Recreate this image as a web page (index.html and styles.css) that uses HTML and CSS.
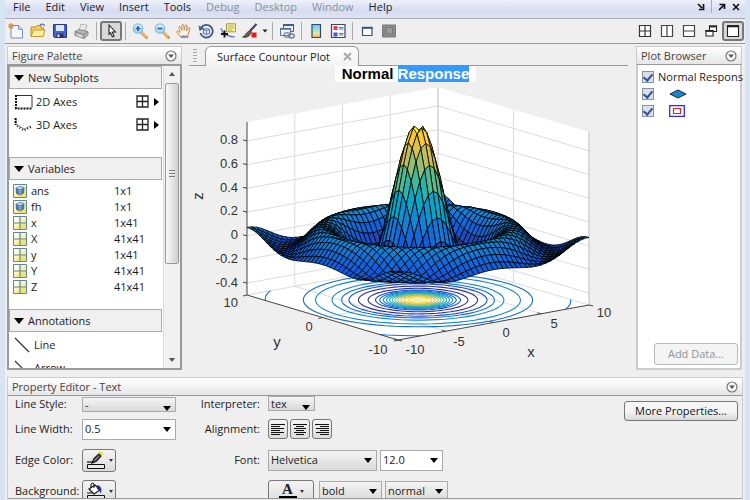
FILE: index.html
```html
<!DOCTYPE html>
<html lang="en">
<head>
<meta charset="utf-8">
<title>Surface Countour Plot</title>
<link rel="stylesheet" href="styles.css">
</head>
<body>
<svg class="defs" aria-hidden="true">
  <defs>
    <linearGradient id="glass" x1="0" y1="0" x2="0" y2="1"><stop offset="0" stop-color="#e8f7fd"/><stop offset="1" stop-color="#9fd3ee"/></linearGradient>
    <linearGradient id="rainbow" x1="0" y1="0" x2="0" y2="1"><stop offset="0" stop-color="#8fb4ea"/><stop offset=".4" stop-color="#8fe6dd"/><stop offset=".7" stop-color="#efe98a"/><stop offset="1" stop-color="#f0a878"/></linearGradient>
    <linearGradient id="cellfill" x1="0" y1="0" x2="1" y2="1"><stop offset=".2" stop-color="#fffef0"/><stop offset=".8" stop-color="#f3e25c"/></linearGradient>
  </defs>
  <symbol id="i-grid4" viewBox="0 0 14 14"><path d="M1 1h11v11H1zM6.500 1v11M1 6.500h11" fill="#fff" stroke="#222" stroke-width="1.300"/></symbol>
  <symbol id="i-menu" viewBox="0 0 12 12"><circle cx="6" cy="6" r="5" fill="#f8f8f8" stroke="#777" stroke-width="1.200"/><path d="M3.200 4.500h5.600L6 8z" fill="#555"/></symbol>
  <symbol id="i-matrix" viewBox="0 0 14 14"><path d="M.5.5h13v13H.5z" fill="url(#cellfill)" stroke="#5e86ad"/><path d="M7 1v12M1 7h12" stroke="#5e86ad" stroke-width="1.200"/></symbol>
  <symbol id="i-object" viewBox="0 0 14 14"><path d="M.5.5h13v13H.5z" fill="url(#cellfill)" stroke="#5e86ad"/><path d="M3 4l4-1.500 4 1-.5 5.500L7 11 3.500 9.500z" fill="#4c80bd" stroke="#2d5586" stroke-width=".8"/><path d="M3 4l4-1.500 4 1L7 5.300z" fill="#b9d6f2"/><path d="M7 5.300V11" stroke="#d4e6f7" stroke-width=".7"/></symbol>
</svg>

<div class="window">
  <nav class="menubar">
    <a href="#">File</a><a href="#">Edit</a><a href="#">View</a><a href="#">Insert</a><a href="#">Tools</a><a href="#" class="off">Debug</a><a href="#" class="off">Desktop</a><a href="#" class="off">Window</a><a href="#">Help</a>
    <div class="dock">
      <button aria-label="Dock"><svg width="8" height="8" viewBox="0 0 8 8"><path d="M1 1l4 4M6.500 1v5.500H2" fill="none" stroke="#111" stroke-width="1.700"/></svg></button>
      <i></i>
      <button aria-label="Undock"><svg width="8" height="8" viewBox="0 0 8 8"><path d="M1 7l5-5M1.500 1.500h5V6" fill="none" stroke="#111" stroke-width="1.700"/></svg></button>
      <button aria-label="Close"><svg width="8" height="8" viewBox="0 0 8 8"><path d="M1 1l6 6M7 1L1 7" stroke="#111" stroke-width="1.600"/></svg></button>
    </div>
  </nav>

  <div class="toolbar">
    <button aria-label="New"><svg viewBox="0 0 16 16"><path d="M3 2.500h7.500l4 4V15H3z" fill="#f4f9ff" stroke="#7291bd"/><path d="M10.500 2.500v4h4z" fill="#cfe0f4" stroke="#7291bd" stroke-width=".8"/><path d="M3 0v6M0 3h6M1 1l4 4M5 1L1 5" stroke="#e58c45" stroke-width="1.100"/></svg></button>
    <button aria-label="Open"><svg viewBox="0 0 16 16"><path d="M1 4h5l1-1.500h4V5h2.500v8H1z" fill="#f6d060" stroke="#b98a25"/><path d="M1 13.500L3.500 7H15l-2 6.500z" fill="#fff0a0" stroke="#c69a2e"/><path d="M10 2c2-1.500 4-1 4.500 1" fill="none" stroke="#4d78b5" stroke-width="1.200"/></svg></button>
    <button aria-label="Save"><svg viewBox="0 0 16 16"><path d="M1.500 1.500h13v13h-12l-1-1z" fill="#4a62c9" stroke="#26348f"/><path d="M4 2h8v6H4z" fill="#dbe8fc"/><path d="M4.500 10.500h7V14h-7z" fill="#26306b"/><path d="M5.500 11.500h2V14h-2z" fill="#eee"/></svg></button>
    <button aria-label="Print"><svg viewBox="0 0 16 16"><path d="M5 8l2-7 6 1.500L10.500 9z" fill="#fff" stroke="#999" stroke-width=".8"/><path d="M7.500 3.500l4 1M7 5.500l4 1" stroke="#b5b5b5" stroke-width=".7"/><path d="M1 8.500l4-2 9 2V12l-4 3.500-9-3z" fill="#b9b9b9" stroke="#777" stroke-width=".8"/><path d="M1 8.500l9 3 4-3M10 11.500v4" fill="none" stroke="#777" stroke-width=".8"/><path d="M3 11.500l5 1.800v1L3 12.500z" fill="#f5f5f5"/></svg></button>
    <i class="sep"></i>
    <button class="on" aria-label="Select"><svg viewBox="0 0 16 16"><path d="M6 2l6.500 7H9.300l1.700 4.200-1.700.7-1.700-4.200L6 11.300z" fill="#fff" stroke="#222" stroke-width="1.100"/></svg></button>
    <i class="sep"></i>
    <button aria-label="Zoom in"><svg viewBox="0 0 16 16"><path d="M9 9l5.500 5.500" stroke="#d99a55" stroke-width="3" stroke-linecap="round"/><path d="M9.500 9l4.500 4.500" stroke="#f5c07a" stroke-width="1.300"/><circle cx="6" cy="5.500" r="4.700" fill="url(#glass)" stroke="#7dbde2" stroke-width="1.200"/><path d="M6 3v5M3.500 5.500h5" stroke="#2558a3" stroke-width="1.600"/></svg></button>
    <button aria-label="Zoom out"><svg viewBox="0 0 16 16"><path d="M9 9l5.500 5.500" stroke="#d99a55" stroke-width="3" stroke-linecap="round"/><path d="M9.500 9l4.500 4.500" stroke="#f5c07a" stroke-width="1.300"/><circle cx="6" cy="5.500" r="4.700" fill="url(#glass)" stroke="#7dbde2" stroke-width="1.200"/><path d="M3.500 5.500h5" stroke="#2558a3" stroke-width="1.600"/></svg></button>
    <button aria-label="Pan"><svg viewBox="0 0 16 16"><path d="M5 14.500L1 9.500c-.8-1.200.6-1.900 1.500-1l1.500 1.200L2.800 4.500c-.2-1.200 1.300-1.500 1.700-.4L6 7.500 5.800 2.300c0-1.200 1.600-1.300 1.800 0l.7 4.800L9.300 2.500c.3-1.100 1.700-.9 1.700.3l-.4 5 1.700-3c.6-1 1.900-.4 1.600.7L12 12v2.500z" fill="#fff3e0" stroke="#c28d5d"/><path d="M5 13.500h6.500" stroke="#6f8fd0" stroke-width="2"/></svg></button>
    <button aria-label="Rotate"><svg viewBox="0 0 16 16"><path d="M3 5a6.300 6.300 0 1 1-.6 5" fill="none" stroke="#44608f" stroke-width="1.900"/><path d="M.5 2.500L1.500 8 6.500 5.500z" fill="#44608f"/><path d="M5.500 6.500l3-1 3 1v4l-3 1-3-1z" fill="#dfe8f4" stroke="#44608f" stroke-width=".9"/><path d="M5.500 6.500l3 1 3-1M8.500 7.500v4" fill="none" stroke="#44608f" stroke-width=".7"/></svg></button>
    <button aria-label="Data cursor"><svg viewBox="0 0 16 16"><path d="M6.500.8h9v8h-9z" fill="#f5ef9a" stroke="#a39b45"/><path d="M8 3h6M8 5h6M8 7h4" stroke="#a9a25a" stroke-width=".8"/><path d="M1 5c1 5 4 8 14 9" fill="none" stroke="#5a62d8" stroke-width="1.200"/><path d="M4.500 7.500v7M1 11h7" stroke="#111" stroke-width="1.900"/></svg></button>
    <button aria-label="Brush"><svg viewBox="0 0 16 16"><path d="M14.500 1L8 8" stroke="#3e4a60" stroke-width="2.200"/><path d="M8.500 7L5 9.500C3.500 11 3 13 .5 14c3 1 6.500 0 8-3l1-2z" fill="#6b5b55" stroke="#3c3230" stroke-width=".7"/><path d="M9.500 9.500h5v5h-5z" fill="#f01818"/></svg></button>
    <button class="drop" aria-label="Brush colours"><svg viewBox="0 0 8 16"><path d="M1.500 6.500h5L4 9.500z" fill="#222"/></svg></button>
    <i class="sep"></i>
    <button aria-label="Link plot"><svg viewBox="0 0 16 16"><path d="M4.500 1.500h10v7h-10z" fill="#e9eff8" stroke="#405c88"/><path d="M4 2h11" stroke="#405c88" stroke-width="2"/><path d="M1.500 5.500h10v7h-10z" fill="#eef3fa" stroke="#5b7093"/><path d="M1 6h11" stroke="#5b7093" stroke-width="1.500"/><ellipse cx="8" cy="12" rx="3" ry="2.200" fill="none" stroke="#8792a3" stroke-width="1.400"/><ellipse cx="12.500" cy="13" rx="2.800" ry="2" fill="none" stroke="#707c90" stroke-width="1.400"/></svg></button>
    <i class="sep"></i>
    <button aria-label="Colorbar"><svg viewBox="0 0 16 16"><path d="M4 1.500h8.500v13H4z" fill="url(#rainbow)" stroke="#33476f" stroke-width="1.200"/></svg></button>
    <button aria-label="Legend"><svg viewBox="0 0 16 16"><path d="M1.500 1.500h13.500v13H1.500z" fill="#f7faff" stroke="#33476f" stroke-width="1.200"/><path d="M3.500 9.500h4v4h-4z" fill="#5552c9"/><path d="M3.500 3h4v4h-4z" fill="#ef3d3d"/><path d="M9 4.500h4.500M9 6h4.500M9 10.500h4.500M9 12h4.500" stroke="#58688c" stroke-width=".9"/></svg></button>
    <i class="sep"></i>
    <button aria-label="Hide plot tools"><svg viewBox="0 0 16 16"><path d="M3.500 4.500h9.500v8H3.500z" fill="#fff" stroke="#33527f" stroke-width="1.200"/><path d="M3 4.800h10.500" stroke="#33527f" stroke-width="2"/></svg></button>
    <button aria-label="Show plot tools"><svg viewBox="0 0 16 16"><path d="M1.500 2h13v12h-13z" fill="#8b8b8b" stroke="#777"/><path d="M5 4.500h6.500V11H5z" fill="#9a9a9a" stroke="#777"/></svg></button>
    <span class="fill"></span>
    <button aria-label="Tile"><svg viewBox="0 0 16 16"><path d="M2.500 2.500h11v11h-11zM8 2.500v11M2.500 8h11" fill="#fff" stroke="#333" stroke-width="1.200"/></svg></button>
    <button aria-label="Left right split"><svg viewBox="0 0 16 16"><path d="M2.500 2.500h11v11h-11zM8 2.500v11" fill="#fff" stroke="#444" stroke-width="1.200"/></svg></button>
    <button aria-label="Top bottom split"><svg viewBox="0 0 16 16"><path d="M2.500 2.500h11v11h-11zM2.500 8h11" fill="#fff" stroke="#444" stroke-width="1.200"/></svg></button>
    <button aria-label="Float"><svg viewBox="0 0 16 16"><path d="M6.500 3h7v5.500h-7z" fill="#fff" stroke="#222" stroke-width="1.100"/><path d="M6 3.500h8" stroke="#222" stroke-width="1.800"/><path d="M3 7.500h7V13H3z" fill="#fff" stroke="#222" stroke-width="1.100"/><path d="M2.500 8h8" stroke="#222" stroke-width="1.800"/></svg></button>
    <button class="on" aria-label="Maximize"><svg viewBox="0 0 16 16"><path d="M2.500 2.500h11v11h-11z" fill="#fff" stroke="#222" stroke-width="1.100"/><path d="M2 3.200h12" stroke="#222" stroke-width="2.200"/></svg></button>
  </div>

  <main class="work">
    <section class="panel palette">
      <h2 class="bar">Figure Palette <button aria-label="Palette menu"><svg width="12" height="12"><use href="#i-menu"/></svg></button></h2>
      <div class="palette-box">
        <div class="palette-list">
          <h3>New Subplots</h3>
          <ul class="subplots">
            <li><svg width="20" height="16" viewBox="0 0 20 16"><path d="M2.500 1.500H18v12" fill="none" stroke="#333"/><path d="M2 1v13.500h16.500" fill="none" stroke="#111" stroke-width="2" stroke-dasharray="2 1"/></svg>2D Axes <svg class="pick" width="14" height="14"><use href="#i-grid4"/></svg><b></b></li>
            <li><svg width="20" height="16" viewBox="0 0 20 16"><path d="M2 1v6l8 5 7-3" fill="none" stroke="#888"/><path d="M1.500 1v7" stroke="#111" stroke-width="2" stroke-dasharray="2 1"/><path d="M3 9l7 4.500 7-3.500" fill="none" stroke="#222" stroke-width="2" stroke-dasharray="1 2"/></svg>3D Axes <svg class="pick" width="14" height="14"><use href="#i-grid4"/></svg><b></b></li>
          </ul>
          <h3>Variables</h3>
          <table>
            <tr><td><svg width="14" height="14"><use href="#i-object"/></svg></td><td>ans</td><td>1x1</td></tr>
            <tr><td><svg width="14" height="14"><use href="#i-object"/></svg></td><td>fh</td><td>1x1</td></tr>
            <tr><td><svg width="14" height="14"><use href="#i-matrix"/></svg></td><td>x</td><td>1x41</td></tr>
            <tr><td><svg width="14" height="14"><use href="#i-matrix"/></svg></td><td>X</td><td>41x41</td></tr>
            <tr><td><svg width="14" height="14"><use href="#i-matrix"/></svg></td><td>y</td><td>1x41</td></tr>
            <tr><td><svg width="14" height="14"><use href="#i-matrix"/></svg></td><td>Y</td><td>41x41</td></tr>
            <tr><td><svg width="14" height="14"><use href="#i-matrix"/></svg></td><td>Z</td><td>41x41</td></tr>
          </table>
          <h3>Annotations</h3>
          <ul class="marks">
            <li><svg width="16" height="16" viewBox="0 0 16 16"><path d="M1 1l14 14" stroke="#333" stroke-width="1.200"/></svg>Line</li>
            <li><svg width="16" height="16" viewBox="0 0 16 16"><path d="M1 1l12 12" stroke="#333" stroke-width="1.200"/><path d="M14 14l-1-6-5 5z" fill="#222"/></svg>Arrow</li>
          </ul>
        </div>
        <div class="scroll"><i class="up"></i><span class="thumb"><i></i><i></i><i></i></span><i class="down"></i></div>
      </div>
    </section>

    <section class="figure">
      <div class="tabs"><span class="grip"></span><span class="tab">Surface Countour Plot <button aria-label="Close tab"><svg width="9" height="9" viewBox="0 0 9 9"><path d="M1 1l7 7M8 1L1 8" stroke="#aaa" stroke-width="2.200"/></svg></button></span><span class="line"></span></div>
      <h1><span>Normal <mark>Response</mark></span></h1>
      <svg id="plot" viewBox="189 82 439 286" preserveAspectRatio="xMidYMin meet" role="img" aria-label="Surface plot with contours"></svg>
    </section>

    <section class="panel browser">
      <h2 class="bar">Plot Browser <button aria-label="Browser menu"><svg width="12" height="12"><use href="#i-menu"/></svg></button></h2>
      <div class="browser-box">
        <label><input type="checkbox" checked>Normal Respons</label>
        <label class="deep"><input type="checkbox" checked aria-label="Surface"><svg width="18" height="10" viewBox="0 0 18 10"><path d="M1 5l8-4 8 4-8 4z" fill="#1b86d6" stroke="#123"/></svg></label>
        <label class="deep"><input type="checkbox" checked aria-label="Contour"><svg width="16" height="12" viewBox="0 0 16 12"><path d="M.7.700h14.600v10.600H.7z" fill="#fff" stroke="#2a2aff" stroke-width="1.300"/><path d="M4.500 3.500h7v5h-7z" fill="#fff" stroke="#f02020" stroke-width="1.200"/></svg></label>
        <button class="push" disabled>Add Data...</button>
      </div>
    </section>
  </main>

  <section class="editor">
    <h2 class="bar">Property Editor - Text <button aria-label="Editor menu"><svg width="12" height="12"><use href="#i-menu"/></svg></button></h2>
    <form class="props">
      <div class="group">
        <label for="ls">Line Style:</label><span class="combo slim w-l"><select id="ls"><option>-</option></select></span>
        <label for="lw">Line Width:</label><span class="combo w-l"><input id="lw" value="0.5"></span>
        <label for="ec">Edge Color:</label><button type="button" id="ec" class="swatch"><svg width="20" height="18" viewBox="0 0 20 18"><path d="M1.500 13.500h17v4h-17z" fill="#e8e8e8" stroke="#111"/><path d="M1 11h8" stroke="#111" stroke-width="1.200"/><path d="M13 3L8 7.500 6 12l4.500-2L15 5z" fill="#777" stroke="#111" stroke-width="1.200"/><path d="M12 1.500l4 3 1.500-2-3-2.500z" fill="#f2e321"/></svg><i></i></button>
        <label for="bg">Background:</label><button type="button" id="bg" class="swatch"><svg width="20" height="18" viewBox="0 0 20 18"><path d="M1.500 13.500h17v4h-17z" fill="#e8e8e8" stroke="#111"/><path d="M3 7l6-4 5 5-6 4z" fill="#fff" stroke="#111" stroke-width="1.200"/><path d="M5 6V2q2-2 3 0v4M1 11h5" fill="none" stroke="#111"/><path d="M11 3q6 1 4 9-1-4-4-5z" fill="#1f2a9e"/></svg><i></i></button>
      </div>
      <div class="group right">
        <label for="in">Interpreter:</label><div><span class="combo slim w-s"><select id="in"><option>tex</option></select></span></div>
        <label for="al">Alignment:</label><div class="aligns">
          <button type="button" id="al" aria-label="Left"><svg width="14" height="12" viewBox="0 0 14 12"><path d="M0 1.500h14M0 3.500h9M0 5.500h13M0 7.500h9M0 9.500h13M0 11.500h9" stroke="#111"/></svg></button>
          <button type="button" aria-label="Center"><svg width="14" height="12" viewBox="0 0 14 12"><path d="M0 1.500h14M3 3.500h8M1 5.500h12M3 7.500h8M1 9.500h12M3 11.500h8" stroke="#111"/></svg></button>
          <button type="button" aria-label="Right"><svg width="14" height="12" viewBox="0 0 14 12"><path d="M0 1.500h14M5 3.500h9M1 5.500h13M5 7.500h9M1 9.500h13M5 11.500h9" stroke="#111"/></svg></button>
        </div>
        <label for="fo">Font:</label><div class="pair"><span class="combo w-f"><select id="fo"><option>Helvetica</option></select></span><span class="combo w-n"><input aria-label="Font size" value="12.0"></span></div>
        <span></span><div class="pair"><button type="button" class="swatch wide" aria-label="Text color"><span>A</span><i></i></button><span class="combo w-n"><select aria-label="Weight"><option>bold</option></select></span><span class="combo w-n"><select aria-label="Angle"><option>normal</option></select></span></div>
      </div>
      <button type="button" class="push more">More Properties...</button>
    </form>
  </section>
</div>
<script src="plot.js"></script>
</body>
</html>
```
FILE: styles.css
```css
* { box-sizing: border-box; }
body {
  margin: 0;
  height: 100vh;
  overflow: hidden;
  background: #d7e4f2;
  color: #1c1c1c;
  font: 11px/16px "Open Sans", "Noto Sans", sans-serif;
}
h1, h2, h3, ul { margin: 0; padding: 0; font-weight: normal; }
ul { list-style: none; }
button, input, select { font: inherit; color: inherit; margin: 0; }
button { padding: 0; border: 0; background: none; display: flex; align-items: center; justify-content: center; }
svg { display: block; flex: none; }
.defs { position: absolute; width: 0; height: 0; }

.window { height: 100%; margin: 0 5px; display: flex; flex-direction: column; background: #efefef; }

.menubar {
  flex: none;
  display: flex;
  gap: 15px;
  height: 19px;
  padding: 0 5px 5px 8px;
  align-items: center;
  border-bottom: 1px solid #a5a9b5;
  background: linear-gradient(#eef1fa, #d6dcf0 60%, #dfe4f4);
}
.menubar a { color: #1a1a2a; text-decoration: none; line-height: 14px; }
.menubar a.off { color: #8b8e98; }
.dock { margin-left: auto; display: flex; align-items: center; gap: 6px; }
.dock i { width: 1px; height: 13px; background: #aaa; }

.toolbar {
  flex: none;
  display: flex;
  align-items: center;
  height: 25px;
  padding-right: 1px;
  border-bottom: 1px solid #999;
}
.toolbar button { width: 22px; height: 20px; border-radius: 3px; }
.toolbar button svg { width: 16px; height: 16px; }
.toolbar button.drop, .toolbar button.drop svg { width: 8px; }
.toolbar button.on { border: 2px solid #777; background: #d9d9d9; }
.sep { width: 1px; height: 18px; margin: 0 3px; background: #aaa; }
.fill { flex: 1; }

.work { flex: 1; min-height: 0; display: grid; grid-template-columns: 177px minmax(0, 1fr) 113px; padding-top: 2px; }
.panel, .editor { display: flex; flex-direction: column; min-height: 0; min-width: 0; }
.palette { padding-left: 2px; }
.browser { padding: 0 3px 0 4px; }
.bar {
  flex: none;
  display: flex;
  align-items: center;
  justify-content: space-between;
  height: 19px;
  padding: 0 4px;
  border: 1px solid #ccc;
  border-bottom-color: #999;
  background: linear-gradient(#fff, #e6e6e6);
  color: #444;
  font-size: 11px;
}

.palette-box { flex: 1; min-height: 0; display: flex; border: 2px solid #999; border-width: 1px 2px 2px; background: #fff; }
.palette-list { flex: 1; min-width: 0; overflow: hidden; }
.palette-list h3 {
  display: flex;
  align-items: center;
  height: 23px;
  margin-right: 1px;
  padding-left: 4px;
  gap: 4px;
  border: 1px solid #aaa;
  background: #f0f0f0;
  font-size: 11px;
}
.palette-list h3::before { content: ""; border: 5px solid transparent; border-top: 6px solid #000; border-bottom: 0; }
.subplots { padding: 1px 4px 10px 5px; height: 68px; }
.subplots li { display: flex; align-items: center; height: 23px; gap: 2px; }
.pick { margin-left: auto; }
.subplots b { margin-left: 2px; border: 4px solid transparent; border-left: 5px solid #000; border-right: 0; }
.palette-list table { width: 100%; border-collapse: collapse; table-layout: fixed; margin: 3px 0 14px; }
.palette-list td { height: 16px; padding: 0; line-height: 14px; }
.palette-list td:nth-child(1) { width: 22px; padding-left: 4px; }
.palette-list td:nth-child(2) { width: 83px; }
.marks { padding: 1px 5px; }
.marks li { display: flex; align-items: center; gap: 4px; height: 23px; }

.scroll { width: 17px; display: flex; flex-direction: column; align-items: center; background: #f1f1f1; border-left: 1px solid #ddd; }
.scroll > i { height: 0; border: 3px solid transparent; }
.scroll .up { margin: 6px 0 7px; border-bottom: 4px solid #555; border-top: 0; }
.scroll .down { margin: auto 0 6px; border-top: 4px solid #555; border-bottom: 0; }
.thumb {
  width: 14px;
  height: 181px;
  display: flex;
  flex-direction: column;
  align-items: center;
  justify-content: center;
  gap: 1px;
  border: 1px solid #999;
  border-radius: 2px;
  background: linear-gradient(90deg, #fafafa, #cfcfcf);
}
.thumb i { width: 6px; height: 2px; background: #777; border-bottom: 1px solid #eee; }

.figure { display: flex; flex-direction: column; min-width: 0; min-height: 0; padding: 0 4px 0 7px; background: #efefef; }
.tabs { flex: none; display: flex; height: 20px; }
.grip { width: 16px; border-bottom: 1px solid #999; background: repeating-linear-gradient(#aaa 0 1px, transparent 1px 3px) 4px 3px / 4px 14px no-repeat; }
.tab {
  display: flex;
  align-items: center;
  gap: 13px;
  padding: 0 6px 0 11px;
  border: 1px solid #999;
  border-bottom: 0;
  border-radius: 6px 6px 0 0;
  background: linear-gradient(#fff, #f3f3f3);
  font-size: 11px;
}
.line { flex: 1; border-bottom: 1px solid #999; }
h1 { flex: none; height: 16px; padding-right: 6px; text-align: center; font: bold 15px/16px "Liberation Sans", sans-serif; color: #000; }
h1 span { display: inline-block; padding: 0 7px; background: #fff; }
mark { background: #3399ff; color: #fff; }
#plot { flex: 1; min-height: 0; width: 100%; font-family: "Liberation Sans", sans-serif; }
.ticks { font-size: 13px; fill: #333; }
.names { font-size: 15px; fill: #333; text-anchor: middle; }

.browser-box { flex: 1; min-height: 0; display: flex; flex-direction: column; padding: 3px 0 3px 4px; border: 2px solid #ccc; border-top: 0; background: #fff; }
.browser-box label { display: flex; align-items: center; height: 17px; gap: 4px; white-space: nowrap; }
.browser-box .deep { gap: 15px; }
.browser-box input {
  appearance: none;
  flex: none;
  width: 12px;
  height: 12px;
  border: 1px solid #8a93a0;
  background: #d9e0ea;
  display: grid;
  place-items: center;
}
.browser-box input:checked::before { content: ""; width: 4px; height: 7px; border: solid #34509a; border-width: 0 2px 2px 0; transform: rotate(40deg); }
.push { height: 20px; padding: 0 10px; border: 1px solid #777; border-radius: 3px; background: linear-gradient(#f5f5f5 50%, #d8d8d8); white-space: nowrap; color: #111; }
.push:disabled { height: 22px; margin: auto 2px 0 auto; padding: 0 13px; border-color: #b5babd; background: #f4f4f4; color: #939393; }

.editor { flex: none; height: 123px; margin: 7px 2px 0; padding-bottom: 1px; }
.props { flex: 1; min-height: 0; display: flex; gap: 30px; padding: 0 4px 0 7px; border: 1px solid #ccc; border-top: 0; border-bottom: 1px solid #999; overflow: hidden; }
.group { display: grid; grid-template-columns: 67px auto; grid-template-rows: 16px 34px 28px 34px; align-items: center; }
.group.right { grid-template-columns: 54px auto; column-gap: 8px; }
.group.right label { justify-self: end; white-space: nowrap; }
.group > label { line-height: 14px; }
.combo { display: inline-flex; position: relative; height: 21px; border: 1px solid #aaa; background: #fff; vertical-align: top; }
.combo::after { content: ""; position: absolute; right: 4px; top: 7px; border: 4px solid transparent; border-top: 5px solid #000; border-bottom: 0; pointer-events: none; }
.combo select, .combo input { appearance: none; width: 100%; min-width: 0; border: 0; padding: 0 2px; border-radius: 0; outline: 0; background: none; line-height: 18px; }
.combo:has(select) { background: linear-gradient(#f4f4f4, #d9d9d9); }
.slim { height: 15px; }
.slim select { line-height: 13px; }
.slim::after { top: 8px; }
.w-l { width: 94px; }
.w-s { width: 47px; }
.w-f { width: 109px; }
.w-n { width: 63px; }
.pair { display: flex; align-items: center; gap: 3px; }
.aligns { display: flex; gap: 2px; }
.aligns button, .swatch { border: 1px solid #777; border-radius: 3px; background: linear-gradient(#f4f4f4, #dcdcdc); }
.aligns button { width: 20px; height: 20px; }
.swatch { width: 34px; height: 23px; gap: 3px; }
.swatch i { border: 2px solid transparent; border-top: 3px solid #333; border-bottom: 0; }
.swatch.wide { width: 46px; margin-right: 2px; }
.swatch.wide span { width: 18px; border-bottom: 4px solid #000; font: bold 15px/13px "Liberation Serif", serif; }
.more { margin: 5px 0 0 auto; }
```
FILE: plot.js
```js
// Surface z = sin(r)/r on a 41x41 grid, with its contours on the floor.
const svg = document.getElementById("plot");
const zMin = -0.5, zTop = 0.96, lo = -0.2172, hi = 0.9589;
const f = (x, y) => { const r = Math.hypot(x, y); return Math.sin(r) / r; };
const project = (x, y, z) => [418 + x * 9.55 - y * 7.55, 300 - x * 1.75 - y * 2.25 - (z - zMin) * 118.5];
const pt = (x, y, z) => project(x, y, z).map(v => v.toFixed(1)).join(",");

const parula = [[53,42,135],[15,92,221],[20,129,214],[6,164,202],[46,183,164],[135,191,119],[209,187,89],[254,200,50],[249,251,14]];
function colour(z) {
  const t = Math.max(0, Math.min(1, (z - lo) / (hi - lo))) * 8;
  const i = Math.min(7, Math.floor(t)), k = t - i;
  return "rgb(" + parula[i].map((c, n) => Math.round(c + (parula[i + 1][n] - c) * k)).join(",") + ")";
}
const poly = (pts, attrs) => `<polygon points="${pts.join(" ")}" ${attrs}/>`;
const line = (a, b) => `<path d="M${a}L${b}"/>`;
let out = "";

// Walls and floor
const floor = [pt(-10, 10, zMin), pt(-10, -10, zMin), pt(10, -10, zMin), pt(10, 10, zMin)];
out += `<clipPath id="floor"><polygon points="${floor.join(" ")}"/></clipPath>`;
out += poly([floor[0], floor[1], floor[2], pt(10, -10, zTop), pt(10, 10, zTop), pt(-10, 10, zTop)], 'fill="#fff"');

// Grid
out += '<g stroke="#dcdcdc" fill="none">';
for (const x of [-5, 0, 5]) out += line(pt(x, 10, zTop), pt(x, 10, zMin)) + line(pt(x, 10, zMin), pt(x, -10, zMin));
out += line(pt(10, 0, zTop), pt(10, 0, zMin)) + line(pt(10, 0, zMin), pt(-10, 0, zMin));
for (let z = -4; z <= 8; z += 2) out += line(pt(-10, 10, z / 10), pt(10, 10, z / 10)) + line(pt(10, 10, z / 10), pt(10, -10, z / 10));
out += line(floor[0], floor[3]) + line(floor[3], floor[2]);
out += '</g><g stroke="#bdbdbd">' + line(pt(10, 10, zTop), floor[3]) + line(pt(10, -10, zTop), floor[2]) + "</g>";

// Contour rings: every radius where sin(r)/r crosses a level
out += '<g fill="none" stroke-width="1.1" clip-path="url(#floor)">';
for (let n = -2; n <= 9; n++) {
  const level = n / 10;
  for (let r = 0.01; r < 14.1; r += 0.01) {
    const a = Math.sin(r) / r - level, b = Math.sin(r + 0.01) / (r + 0.01) - level;
    if (a * b > 0) continue;
    const ring = [];
    for (let t = 0; t < 72; t++) ring.push(pt(r * Math.cos(t * Math.PI / 36), r * Math.sin(t * Math.PI / 36), zMin));
    out += poly(ring, `stroke="${colour(level)}"`);
  }
}
out += "</g>";

// Axis lines and ticks
out += '<g stroke="#444" fill="none">' + line(floor[0], pt(-10, 10, zTop)) + line(floor[0], floor[1]) + line(floor[1], floor[2]);
const tick = (p, dx, dy) => `<path d="M${p}l${dx} ${dy}"/>`;
for (let z = -4; z <= 8; z += 2) out += tick(pt(-10, 10, z / 10), -4, -1);
for (const y of [-10, 0, 10]) out += tick(pt(-10, y, zMin), -4, 1);
for (const x of [-10, -5, 0, 5]) out += tick(pt(x, -10, zMin), -4, -1);
out += tick(floor[1], 4, 1) + tick(floor[2], 4, 1) + "</g>";

// Mesh, painted from back to front; cells that touch the undefined centre are left out
out += '<g stroke="#000" stroke-width=".8" stroke-linejoin="round">';
for (let i = 39; i >= 0; i--) for (let j = 39; j >= 0; j--) {
  const x = i / 2 - 10, y = j / 2 - 10;
  const corners = [[x, y], [x + .5, y], [x + .5, y + .5], [x, y + .5]];
  const zs = corners.map(c => f(c[0], c[1]));
  if (zs.some(Number.isNaN)) continue;
  out += poly(corners.map((c, k) => pt(c[0], c[1], zs[k])), `fill="${colour(zs[0])}"`);
}
out += "</g>";

// Labels
const text = (x, y, s) => `<text x="${x}" y="${y}">${s}</text>`;
out += '<g class="ticks" text-anchor="end">';
[["0.8", 144], ["0.6", 168], ["0.4", 192], ["0.2", 215], ["0", 239], ["-0.2", 263], ["-0.4", 287], ["10", 307]].forEach(t => out += text(238, t[1], t[0]));
out += '</g><g class="ticks" text-anchor="middle">';
[["0", 309, 331], ["-10", 378, 354], ["-10", 415, 354], ["-5", 459, 346], ["0", 506, 337], ["5", 554, 328], ["10", 604, 317]].forEach(t => out += text(t[1], t[2], t[0]));
out += '</g><g class="names">' + text(277, 347, "y") + text(531, 357, "x") + '<text transform="translate(203 196) rotate(-90)">z</text></g>';

svg.innerHTML = out;
```
